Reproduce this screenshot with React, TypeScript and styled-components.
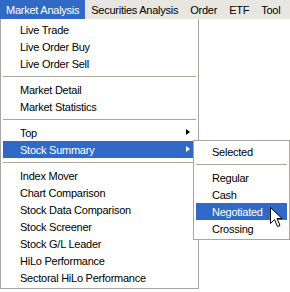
import React from "react";
import styled, { createGlobalStyle } from "styled-components";

const Global = createGlobalStyle`
  html, body { margin: 0; padding: 0; background: #ffffff; }
  body {
    font-family: "Liberation Sans", Arial, sans-serif;
    font-size: 11px;
    letter-spacing: -0.25px;
    color: #000;
  }
`;

const Screen = styled.div`
  position: relative;
  width: 290px;
  height: 292px;
  overflow: hidden;
  background: #ffffff;
`;

const MenuBar = styled.div`
  display: flex;
  height: 19px;
  align-items: stretch;
  background: #e8e6e1;
`;

const BarItem = styled.div<{ $active?: boolean }>`
  display: flex;
  align-items: center;
  padding: 0 6px;
  background: ${(p) => (p.$active ? "#316ac5" : "transparent")};
  color: ${(p) => (p.$active ? "#ffffff" : "#000000")};
  white-space: nowrap;
`;

const Dropdown = styled.div`
  width: 193px;
  box-sizing: content-box;
  border: 1px solid #a7a6a2;
  border-top: none;
  padding: 2px 2px;
  background: #ffffff;
`;

const SubMenu = styled.div`
  position: absolute;
  left: 193px;
  top: 140px;
  width: 91px;
  border: 1px solid #a7a6a2;
  padding: 2px 2px;
  background: #ffffff;
`;

const Item = styled.div<{ $active?: boolean; $indent?: number }>`
  position: relative;
  display: flex;
  align-items: center;
  height: 17px;
  padding-left: ${(p) => p.$indent ?? 17}px;
  background: ${(p) => (p.$active ? "#316ac5" : "transparent")};
  color: ${(p) => (p.$active ? "#ffffff" : "#000000")};
  white-space: nowrap;
`;

const Arrow = styled.span<{ $active?: boolean }>`
  position: absolute;
  right: 6px;
  top: 5px;
  width: 0;
  height: 0;
  border-top: 3.5px solid transparent;
  border-bottom: 3.5px solid transparent;
  border-left: 4px solid ${(p) => (p.$active ? "#ffffff" : "#000000")};
`;

const Separator = styled.div`
  height: 9px;
  display: flex;
  align-items: center;
  &::after {
    content: "";
    flex: 1;
    height: 1px;
    background: #aca899;
  }
`;

const Cursor = styled.svg`
  position: absolute;
  left: 270px;
  top: 207px;
`;

export default function App() {
  return (
    <Screen>
      <Global />
      <MenuBar>
        <BarItem $active>Market Analysis</BarItem>
        <BarItem>Securities Analysis</BarItem>
        <BarItem>Order</BarItem>
        <BarItem>ETF</BarItem>
        <BarItem>Tool</BarItem>
      </MenuBar>
      <Dropdown>
        <Item>Live Trade</Item>
        <Item>Live Order Buy</Item>
        <Item>Live Order Sell</Item>
        <Separator />
        <Item>Market Detail</Item>
        <Item>Market Statistics</Item>
        <Separator />
        <Item>
          Top
          <Arrow />
        </Item>
        <Item $active>
          Stock Summary
          <Arrow $active />
        </Item>
        <Separator />
        <Item>Index Mover</Item>
        <Item>Chart Comparison</Item>
        <Item>Stock Data Comparison</Item>
        <Item>Stock Screener</Item>
        <Item>Stock G/L Leader</Item>
        <Item>HiLo Performance</Item>
        <Item>Sectoral HiLo Performance</Item>
      </Dropdown>
      <SubMenu>
        <Item $indent={16}>Selected</Item>
        <Separator />
        <Item $indent={16}>Regular</Item>
        <Item $indent={16}>Cash</Item>
        <Item $indent={16} $active>Negotiated</Item>
        <Item $indent={16}>Crossing</Item>
      </SubMenu>
      <Cursor width="13" height="22" viewBox="0 0 13 22">
        <path
          d="M0.5 0.5 L0.5 16.5 L4.5 12.5 L7.5 19.5 L10 18.5 L7 11.5 L12 11.5 Z"
          fill="#ffffff"
          stroke="#000000"
          strokeWidth="1"
        />
      </Cursor>
    </Screen>
  );
}
